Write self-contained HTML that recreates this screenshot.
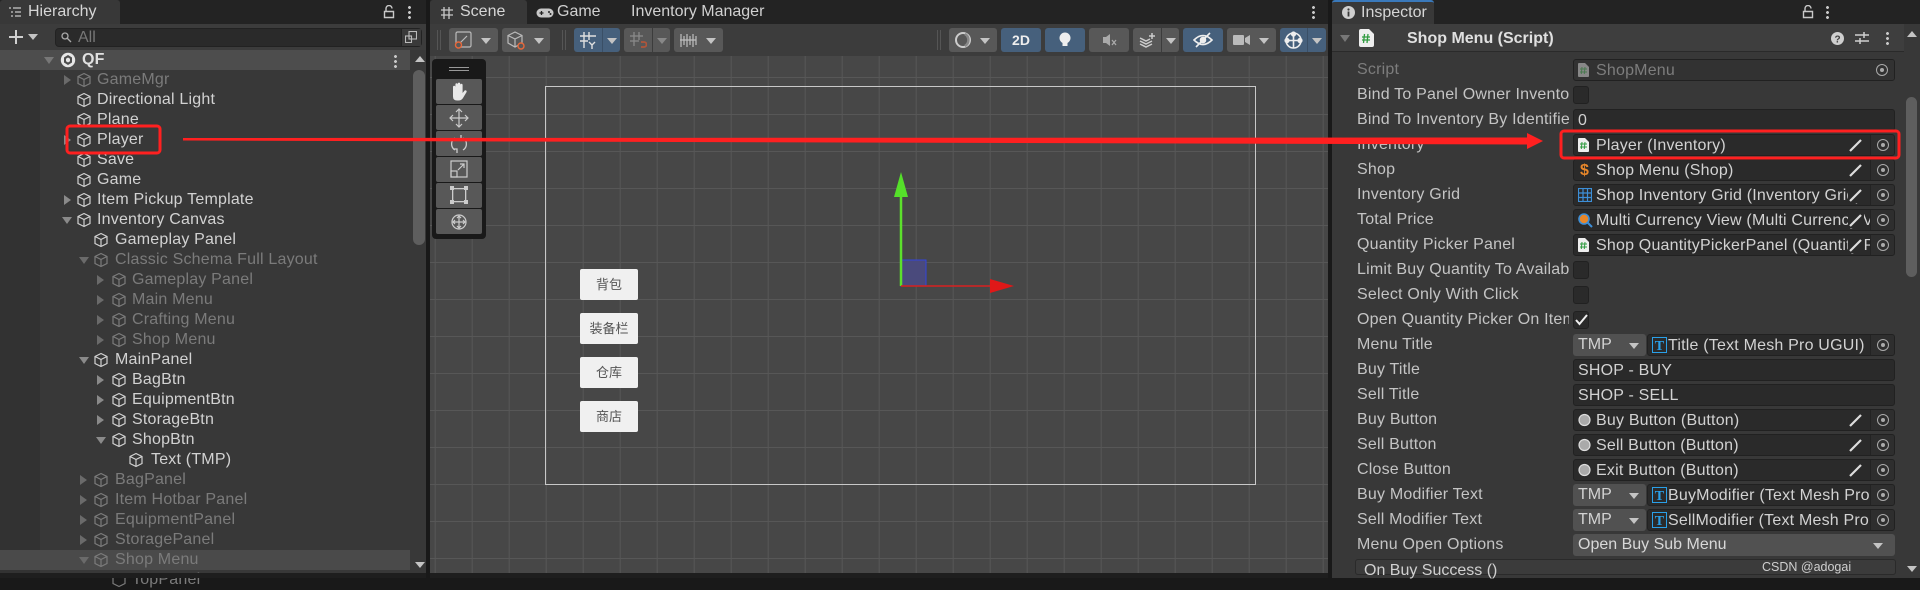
<!DOCTYPE html>
<html><head><meta charset="utf-8">
<style>
*{margin:0;padding:0;box-sizing:border-box}
html,body{width:1920px;height:578px;overflow:hidden;background:#191919;font-family:"Liberation Sans","Noto Sans CJK SC",sans-serif;font-size:16px;color:#d2d2d2}
.a{position:absolute}
.tabbar{position:absolute;top:0;height:24px;background:#232323}
.tab{position:absolute;top:0;height:24px;background:#383838;border-radius:3px 3px 0 0;line-height:24px;font-size:16px;color:#d6d6d6}
.r{position:absolute;left:0;width:410px;height:20px;line-height:20px;white-space:nowrap;font-size:16px;letter-spacing:0.2px}
.r span{position:absolute;top:0}
.r svg{position:absolute;top:2px}
.dim{color:#7b7b7b}
.art{position:absolute;top:5px;width:0;height:0;border-top:5px solid transparent;border-bottom:5px solid transparent;border-left:7px solid #8a8a8a}
.ard{position:absolute;top:7px;width:0;height:0;border-left:5px solid transparent;border-right:5px solid transparent;border-top:7px solid #8a8a8a}
.dim .art{border-left-color:#6a6a6a}.dim .ard{border-top-color:#6a6a6a}
.btn{position:absolute;top:28px;height:24px;background:#585858;border-radius:3px}
.blue{background:#46607c}
.dd{position:absolute;top:10px;width:0;height:0;border-left:5px solid transparent;border-right:5px solid transparent;border-top:6px solid #c4c4c4}
.tp{position:absolute;left:436px;width:46px;height:25px;background:#585858;border-radius:2px}
.lbl{position:absolute;left:1357px;width:212px;overflow:hidden;white-space:nowrap;height:22px;line-height:22px;color:#c4c4c4;font-size:16px;letter-spacing:0.2px}
.fld{position:absolute;height:22px;line-height:21px;background:#2a2a2a;border:1px solid #212121;border-radius:3px;white-space:nowrap;overflow:hidden;font-size:16px;letter-spacing:0.2px;color:#d2d2d2}
.chk{position:absolute;left:1573px;width:16px;height:18px;background:#2a2a2a;border:1px solid #212121;border-radius:3px}
.obj{left:1573px;width:322px;padding-left:22px}
.tgt{position:absolute;right:0;top:0;width:24px;height:20px;background:#2e2e2e;border-left:1px solid #232323}
.tgt:after{content:"";position:absolute;left:6px;top:4px;width:10px;height:10px;border:1.5px solid #aaa;border-radius:50%}
.tgt:before{content:"";position:absolute;left:10px;top:8px;width:4px;height:4px;background:#aaa;border-radius:50%;z-index:1}
.pen{position:absolute;right:30px;top:2px;background:#2a2a2a}
.ic{position:absolute;left:4px;top:3px}
.tmp{position:absolute;left:1573px;width:73px;height:22px;background:#515151;border-radius:3px;line-height:22px;padding-left:5px;font-size:16px;color:#d2d2d2}
.tmp .dd{left:56px;top:9px}
.chip{position:absolute;left:12px;top:4px}
</style></head><body>

<!-- ================= HIERARCHY ================= -->
<div class="tabbar" style="left:0;width:427px"></div>
<div class="tab" style="left:0;width:120px">
 <svg class="a" style="left:8px;top:6px" width="14" height="12" viewBox="0 0 14 12" stroke="#c8c8c8" stroke-width="1.3"><path d="M1 2h2M5 2h8M3 6h2M7 6h6M3 10h2M7 10h6"/></svg>
 <span class="a" style="left:28px">Hierarchy</span></div>
<svg class="a" style="left:383px;top:5px" width="12" height="14" viewBox="0 0 12 14" fill="none" stroke="#c8c8c8" stroke-width="1.4"><path d="M3 6V3.5a3 3 0 0 1 6 0M1.5 6.5h9v6h-9z"/></svg>
<div class="a" style="left:408px;top:5px;width:3px;height:14px;background:radial-gradient(circle,#c8c8c8 1.3px,transparent 1.6px) 0 0/3px 5px"></div>
<div class="a" style="left:0;top:24px;width:427px;height:26px;background:#3c3c3c"></div>
<svg class="a" style="left:8px;top:29px" width="16" height="16" stroke="#d0d0d0" stroke-width="2"><path d="M8 1v14M1 8h14"/></svg>
<div class="dd" style="left:28px;top:34px"></div>
<div class="a" style="left:55px;top:28px;width:367px;height:19px;background:#2a2a2a;border:1px solid #222;border-radius:4px"></div>
<svg class="a" style="left:61px;top:32px" width="12" height="11" fill="none" stroke="#aaa" stroke-width="1.3"><circle cx="4" cy="4" r="3"/><path d="M6 6l4 4"/></svg>
<span class="a" style="left:78px;top:28px;line-height:19px;color:#777">All</span>
<div class="a" style="left:401px;top:29px;width:20px;height:17px;background:#3a3a3a;border-left:1px solid #222"></div>
<svg class="a" style="left:405px;top:31px" width="12" height="12" fill="none" stroke="#bbb" stroke-width="1.1"><rect x="4" y="0.5" width="7.5" height="7.5"/><rect x="0.5" y="5" width="6" height="6.5"/></svg>

<div class="a" style="left:0;top:50px;width:427px;height:528px;background:#383838"></div>
<div class="a" style="left:0;top:70px;width:40px;height:508px;background:#323232"></div>
<div class="a" style="left:0;top:50px;width:410px;height:20px;background:#4d4d4d"></div>
<div class="a" style="left:0;top:550px;width:410px;height:20px;background:#4a4a4a"></div>

<div class="r" style="top:50px"><i class="ard" style="left:44px;border-top-color:#777"></i>
 <svg style="left:60px;top:2px" width="16" height="16" viewBox="0 0 16 16"><circle cx="8" cy="8" r="7.2" fill="#e6e6e6"/><path d="M8 3L12 5.5V10.5L8 13L4 10.5V5.5Z" fill="#4d4d4d"/><path d="M8 5.5L10 6.7V9.3L8 10.5L6 9.3V6.7Z" fill="#e6e6e6"/></svg>
 <span style="left:82px;font-weight:bold;color:#e0e0e0">QF</span></div>
<div class="a" style="left:394px;top:54px;width:3px;height:14px;background:radial-gradient(circle,#c8c8c8 1.3px,transparent 1.6px) 0 0/3px 5px"></div>

<div class="r dim" style="top:70px"><i class="art" style="left:64px"></i><svg style="left:76px" width="16" height="16" viewBox="0 0 16 16" fill="none" stroke="currentColor" stroke-width="1.2"><path d="M8 1.5L14 4.5V11.5L8 14.5L2 11.5V4.5ZM2 4.5L8 7.5L14 4.5M8 7.5V14.5"/></svg><span style="left:97px">GameMgr</span></div>
<div class="r" style="top:90px"><svg style="left:76px" width="16" height="16" viewBox="0 0 16 16" fill="none" stroke="currentColor" stroke-width="1.2"><path d="M8 1.5L14 4.5V11.5L8 14.5L2 11.5V4.5ZM2 4.5L8 7.5L14 4.5M8 7.5V14.5"/></svg><span style="left:97px">Directional Light</span></div>
<div class="r" style="top:110px"><svg style="left:76px" width="16" height="16" viewBox="0 0 16 16" fill="none" stroke="currentColor" stroke-width="1.2"><path d="M8 1.5L14 4.5V11.5L8 14.5L2 11.5V4.5ZM2 4.5L8 7.5L14 4.5M8 7.5V14.5"/></svg><span style="left:97px">Plane</span></div>
<div class="r" style="top:130px"><i class="art" style="left:64px"></i><svg style="left:76px" width="16" height="16" viewBox="0 0 16 16" fill="none" stroke="currentColor" stroke-width="1.2"><path d="M8 1.5L14 4.5V11.5L8 14.5L2 11.5V4.5ZM2 4.5L8 7.5L14 4.5M8 7.5V14.5"/></svg><span style="left:97px">Player</span></div>
<div class="r" style="top:150px"><svg style="left:76px" width="16" height="16" viewBox="0 0 16 16" fill="none" stroke="currentColor" stroke-width="1.2"><path d="M8 1.5L14 4.5V11.5L8 14.5L2 11.5V4.5ZM2 4.5L8 7.5L14 4.5M8 7.5V14.5"/></svg><span style="left:97px">Save</span></div>
<div class="r" style="top:170px"><svg style="left:76px" width="16" height="16" viewBox="0 0 16 16" fill="none" stroke="currentColor" stroke-width="1.2"><path d="M8 1.5L14 4.5V11.5L8 14.5L2 11.5V4.5ZM2 4.5L8 7.5L14 4.5M8 7.5V14.5"/></svg><span style="left:97px">Game</span></div>
<div class="r" style="top:190px"><i class="art" style="left:64px"></i><svg style="left:76px" width="16" height="16" viewBox="0 0 16 16" fill="none" stroke="currentColor" stroke-width="1.2"><path d="M8 1.5L14 4.5V11.5L8 14.5L2 11.5V4.5ZM2 4.5L8 7.5L14 4.5M8 7.5V14.5"/></svg><span style="left:97px">Item Pickup Template</span></div>
<div class="r" style="top:210px"><i class="ard" style="left:62px"></i><svg style="left:76px" width="16" height="16" viewBox="0 0 16 16" fill="none" stroke="currentColor" stroke-width="1.2"><path d="M8 1.5L14 4.5V11.5L8 14.5L2 11.5V4.5ZM2 4.5L8 7.5L14 4.5M8 7.5V14.5"/></svg><span style="left:97px">Inventory Canvas</span></div>
<div class="r" style="top:230px"><svg style="left:93px" width="16" height="16" viewBox="0 0 16 16" fill="none" stroke="currentColor" stroke-width="1.2"><path d="M8 1.5L14 4.5V11.5L8 14.5L2 11.5V4.5ZM2 4.5L8 7.5L14 4.5M8 7.5V14.5"/></svg><span style="left:115px">Gameplay Panel</span></div>
<div class="r dim" style="top:250px"><i class="ard" style="left:79px"></i><svg style="left:93px" width="16" height="16" viewBox="0 0 16 16" fill="none" stroke="currentColor" stroke-width="1.2"><path d="M8 1.5L14 4.5V11.5L8 14.5L2 11.5V4.5ZM2 4.5L8 7.5L14 4.5M8 7.5V14.5"/></svg><span style="left:115px">Classic Schema Full Layout</span></div>
<div class="r dim" style="top:270px"><i class="art" style="left:97px"></i><svg style="left:111px" width="16" height="16" viewBox="0 0 16 16" fill="none" stroke="currentColor" stroke-width="1.2"><path d="M8 1.5L14 4.5V11.5L8 14.5L2 11.5V4.5ZM2 4.5L8 7.5L14 4.5M8 7.5V14.5"/></svg><span style="left:132px">Gameplay Panel</span></div>
<div class="r dim" style="top:290px"><i class="art" style="left:97px"></i><svg style="left:111px" width="16" height="16" viewBox="0 0 16 16" fill="none" stroke="currentColor" stroke-width="1.2"><path d="M8 1.5L14 4.5V11.5L8 14.5L2 11.5V4.5ZM2 4.5L8 7.5L14 4.5M8 7.5V14.5"/></svg><span style="left:132px">Main Menu</span></div>
<div class="r dim" style="top:310px"><i class="art" style="left:97px"></i><svg style="left:111px" width="16" height="16" viewBox="0 0 16 16" fill="none" stroke="currentColor" stroke-width="1.2"><path d="M8 1.5L14 4.5V11.5L8 14.5L2 11.5V4.5ZM2 4.5L8 7.5L14 4.5M8 7.5V14.5"/></svg><span style="left:132px">Crafting Menu</span></div>
<div class="r dim" style="top:330px"><i class="art" style="left:97px"></i><svg style="left:111px" width="16" height="16" viewBox="0 0 16 16" fill="none" stroke="currentColor" stroke-width="1.2"><path d="M8 1.5L14 4.5V11.5L8 14.5L2 11.5V4.5ZM2 4.5L8 7.5L14 4.5M8 7.5V14.5"/></svg><span style="left:132px">Shop Menu</span></div>
<div class="r" style="top:350px"><i class="ard" style="left:79px"></i><svg style="left:93px" width="16" height="16" viewBox="0 0 16 16" fill="none" stroke="currentColor" stroke-width="1.2"><path d="M8 1.5L14 4.5V11.5L8 14.5L2 11.5V4.5ZM2 4.5L8 7.5L14 4.5M8 7.5V14.5"/></svg><span style="left:115px">MainPanel</span></div>
<div class="r" style="top:370px"><i class="art" style="left:97px"></i><svg style="left:111px" width="16" height="16" viewBox="0 0 16 16" fill="none" stroke="currentColor" stroke-width="1.2"><path d="M8 1.5L14 4.5V11.5L8 14.5L2 11.5V4.5ZM2 4.5L8 7.5L14 4.5M8 7.5V14.5"/></svg><span style="left:132px">BagBtn</span></div>
<div class="r" style="top:390px"><i class="art" style="left:97px"></i><svg style="left:111px" width="16" height="16" viewBox="0 0 16 16" fill="none" stroke="currentColor" stroke-width="1.2"><path d="M8 1.5L14 4.5V11.5L8 14.5L2 11.5V4.5ZM2 4.5L8 7.5L14 4.5M8 7.5V14.5"/></svg><span style="left:132px">EquipmentBtn</span></div>
<div class="r" style="top:410px"><i class="art" style="left:97px"></i><svg style="left:111px" width="16" height="16" viewBox="0 0 16 16" fill="none" stroke="currentColor" stroke-width="1.2"><path d="M8 1.5L14 4.5V11.5L8 14.5L2 11.5V4.5ZM2 4.5L8 7.5L14 4.5M8 7.5V14.5"/></svg><span style="left:132px">StorageBtn</span></div>
<div class="r" style="top:430px"><i class="ard" style="left:96px"></i><svg style="left:111px" width="16" height="16" viewBox="0 0 16 16" fill="none" stroke="currentColor" stroke-width="1.2"><path d="M8 1.5L14 4.5V11.5L8 14.5L2 11.5V4.5ZM2 4.5L8 7.5L14 4.5M8 7.5V14.5"/></svg><span style="left:132px">ShopBtn</span></div>
<div class="r" style="top:450px"><svg style="left:128px" width="16" height="16" viewBox="0 0 16 16" fill="none" stroke="currentColor" stroke-width="1.2"><path d="M8 1.5L14 4.5V11.5L8 14.5L2 11.5V4.5ZM2 4.5L8 7.5L14 4.5M8 7.5V14.5"/></svg><span style="left:151px">Text (TMP)</span></div>
<div class="r dim" style="top:470px"><i class="art" style="left:80px"></i><svg style="left:93px" width="16" height="16" viewBox="0 0 16 16" fill="none" stroke="currentColor" stroke-width="1.2"><path d="M8 1.5L14 4.5V11.5L8 14.5L2 11.5V4.5ZM2 4.5L8 7.5L14 4.5M8 7.5V14.5"/></svg><span style="left:115px">BagPanel</span></div>
<div class="r dim" style="top:490px"><i class="art" style="left:80px"></i><svg style="left:93px" width="16" height="16" viewBox="0 0 16 16" fill="none" stroke="currentColor" stroke-width="1.2"><path d="M8 1.5L14 4.5V11.5L8 14.5L2 11.5V4.5ZM2 4.5L8 7.5L14 4.5M8 7.5V14.5"/></svg><span style="left:115px">Item Hotbar Panel</span></div>
<div class="r dim" style="top:510px"><i class="art" style="left:80px"></i><svg style="left:93px" width="16" height="16" viewBox="0 0 16 16" fill="none" stroke="currentColor" stroke-width="1.2"><path d="M8 1.5L14 4.5V11.5L8 14.5L2 11.5V4.5ZM2 4.5L8 7.5L14 4.5M8 7.5V14.5"/></svg><span style="left:115px">EquipmentPanel</span></div>
<div class="r dim" style="top:530px"><i class="art" style="left:80px"></i><svg style="left:93px" width="16" height="16" viewBox="0 0 16 16" fill="none" stroke="currentColor" stroke-width="1.2"><path d="M8 1.5L14 4.5V11.5L8 14.5L2 11.5V4.5ZM2 4.5L8 7.5L14 4.5M8 7.5V14.5"/></svg><span style="left:115px">StoragePanel</span></div>
<div class="r dim" style="top:550px"><i class="ard" style="left:79px"></i><svg style="left:93px" width="16" height="16" viewBox="0 0 16 16" fill="none" stroke="currentColor" stroke-width="1.2"><path d="M8 1.5L14 4.5V11.5L8 14.5L2 11.5V4.5ZM2 4.5L8 7.5L14 4.5M8 7.5V14.5"/></svg><span style="left:115px">Shop Menu</span></div>
<div class="r dim" style="top:570px"><svg style="left:111px" width="16" height="16" viewBox="0 0 16 16" fill="none" stroke="currentColor" stroke-width="1.2"><path d="M8 1.5L14 4.5V11.5L8 14.5L2 11.5V4.5Z"/></svg><span style="left:132px">TopPanel</span></div>
<div class="a" style="left:0;top:573px;width:1920px;height:5px;background:#1e1e1e"></div>

<!-- hierarchy scrollbar -->
<div class="a" style="left:415px;top:56px;width:0;height:0;border-left:5px solid transparent;border-right:5px solid transparent;border-bottom:6px solid #c4c4c4"></div>
<div class="a" style="left:413px;top:70px;width:12px;height:175px;background:#5e5e5e;border-radius:6px"></div>
<div class="a" style="left:415px;top:562px;width:0;height:0;border-left:5px solid transparent;border-right:5px solid transparent;border-top:6px solid #c4c4c4"></div>

<!-- ================= SCENE ================= -->
<div class="tabbar" style="left:430px;width:898px"></div>
<div class="tab" style="left:430px;width:97px">
 <svg class="a" style="left:10px;top:6px" width="13" height="13" stroke="#c8c8c8" stroke-width="1.3"><path d="M4 1v12M9 1v12M1 4h12M1 9h12"/></svg>
 <span class="a" style="left:30px">Scene</span></div>
<svg class="a" style="left:536px;top:8px" width="18" height="10" viewBox="0 0 18 10"><rect x="0.5" y="0.5" width="17" height="9" rx="4.5" fill="#c8c8c8"/><path d="M3.5 5h4M5.5 3v4" stroke="#232323" stroke-width="1.3"/><circle cx="13" cy="4" r="1" fill="#232323"/><circle cx="14.5" cy="6" r="1" fill="#232323"/></svg>
<span class="a" style="left:557px;top:0;line-height:24px;color:#d0d0d0">Game</span>
<span class="a" style="left:631px;top:0;line-height:24px;color:#d0d0d0">Inventory Manager</span>
<div class="a" style="left:1312px;top:5px;width:3px;height:14px;background:radial-gradient(circle,#c8c8c8 1.3px,transparent 1.6px) 0 0/3px 5px"></div>

<div class="a" style="left:430px;top:24px;width:898px;height:32px;background:#3c3c3c"></div>
<div class="a" style="left:437px;top:30px;width:4px;height:20px;border-left:1px solid #555;border-right:1px solid #555"></div>
<div class="btn" style="left:449px;width:49px"><svg class="a" style="left:5px;top:3px" width="18" height="18" fill="none"><rect x="2" y="1" width="15" height="15" rx="1.5" stroke="#bbb" stroke-width="1.2"/><path d="M6 12L13 5" stroke="#bbb" stroke-width="1.2"/><circle cx="4.5" cy="14" r="3" stroke="#e8683a" stroke-width="1.4" fill="#585858"/></svg><i class="dd" style="left:32px"></i></div>
<div class="btn" style="left:502px;width:48px"><svg class="a" style="left:4px;top:3px" width="19" height="19" fill="none" stroke="#bbb" stroke-width="1.2"><path d="M9 1L16 4.5V12L9 16L2 12V4.5ZM2 4.5L9 8L16 4.5M9 8V16"/><circle cx="15" cy="15" r="3" stroke="#e8683a" stroke-width="1.4" fill="#585858"/></svg><i class="dd" style="left:32px"></i></div>
<div class="a" style="left:562px;top:30px;width:4px;height:20px;border-left:1px solid #555;border-right:1px solid #555"></div>
<div class="btn blue" style="left:574px;width:46px"><svg class="a" style="left:5px;top:3px" width="18" height="18" stroke="#e0e0e0" stroke-width="1.4" fill="none"><path d="M5 1v16M10 1v8M1 5h16M1 10h8M10 11l3 3 3-3M13 14v4"/></svg><div class="a" style="left:28px;top:0;width:1px;height:24px;background:#3a4f66"></div><i class="dd" style="left:33px"></i></div>
<div class="btn" style="left:624px;width:46px"><svg class="a" style="left:5px;top:3px" width="18" height="18" stroke="#8a8a8a" stroke-width="1.3" fill="none"><path d="M5 1v14M10 1v8M1 5h13M1 10h9"/><path d="M12 11h3a2.5 2.5 0 0 1 0 5h-3" stroke="#b0553a" stroke-width="1.8"/></svg><div class="a" style="left:28px;top:0;width:1px;height:24px;background:#3c3c3c"></div><i class="dd" style="left:33px;border-top-color:#888"></i></div>
<div class="btn" style="left:674px;width:49px"><svg class="a" style="left:5px;top:4px" width="18" height="16" stroke="#c0c0c0" stroke-width="1.2"><path d="M1 8h16M2 2v13M5 4v9M8 2v13M11 4v9M14 2v13M17 4v9"/></svg><i class="dd" style="left:32px"></i></div>

<div class="a" style="left:937px;top:30px;width:4px;height:20px;border-left:1px solid #555;border-right:1px solid #555"></div>
<div class="btn" style="left:949px;width:48px"><svg class="a" style="left:5px;top:3px" width="18" height="18" fill="none"><circle cx="9" cy="9" r="7" stroke="#ccc" stroke-width="2"/><path d="M11 3a7 7 0 0 1 0 12" stroke="#888" stroke-width="2.5"/></svg><i class="dd" style="left:31px"></i></div>
<div class="btn blue" style="left:1001px;width:40px;text-align:center;line-height:24px;font-weight:bold;font-size:14px;color:#eee">2D</div>
<div class="btn blue" style="left:1045px;width:40px"><svg class="a" style="left:13px;top:3px" width="14" height="18"><circle cx="7" cy="7" r="5.5" fill="#eee"/><rect x="4.5" y="11" width="5" height="4" fill="#eee"/></svg></div>
<div class="btn" style="left:1089px;width:40px"><svg class="a" style="left:13px;top:5px" width="16" height="14" fill="#aaa"><path d="M1 4h3l4-3v12l-4-3H1z"/><path d="M10 7l4 5M14 7l-4 5" stroke="#aaa" stroke-width="1.3"/></svg></div>
<div class="btn" style="left:1133px;width:46px"><svg class="a" style="left:5px;top:4px" width="18" height="16" stroke="#ccc" stroke-width="1.5" fill="none"><path d="M2 9l6 3 6-3M2 12l6 3 6-3M2 6l6 3 4-2"/><path d="M14 1v6M11 4h6"/></svg><div class="a" style="left:28px;top:0;width:1px;height:24px;background:#3c3c3c"></div><i class="dd" style="left:33px"></i></div>
<div class="btn blue" style="left:1183px;width:40px"><svg class="a" style="left:10px;top:4px" width="20" height="16" fill="none" stroke="#eee" stroke-width="1.6"><path d="M1 8q9-9 18 0q-9 9-18 0z"/><circle cx="10" cy="8" r="2.5" fill="#eee"/><path d="M3 15L17 1"/></svg></div>
<div class="btn" style="left:1227px;width:49px"><svg class="a" style="left:6px;top:6px" width="18" height="12" fill="#bbb"><rect x="0" y="1" width="11" height="10" rx="1"/><path d="M12 4l5-3v10l-5-3z"/></svg><i class="dd" style="left:32px"></i></div>
<div class="btn blue" style="left:1280px;width:46px"><svg class="a" style="left:4px;top:3px" width="19" height="19" fill="none" stroke="#eee" stroke-width="1.6"><circle cx="9.5" cy="9.5" r="7.5"/><path d="M2 9.5h15M9.5 2v15"/><circle cx="9.5" cy="3" r="1.8" fill="#eee"/><circle cx="3" cy="9.5" r="1.8" fill="#eee"/><circle cx="16" cy="9.5" r="1.8" fill="#eee"/></svg><div class="a" style="left:27px;top:0;width:1px;height:24px;background:#3a4f66"></div><i class="dd" style="left:32px"></i></div>

<!-- scene view -->
<div class="a" style="left:430px;top:56px;width:898px;height:517px;background-color:#474747;background-image:linear-gradient(90deg,#575757 1px,transparent 1px),linear-gradient(0deg,#575757 1px,transparent 1px);background-size:37px 37px,37px 37px;background-position:4.7px 0,0 22px"></div>
<div class="a" style="left:545px;top:86px;width:711px;height:399px;border:1.3px solid #c8c8c8"></div>
<div class="a" style="left:580px;top:269px;width:58px;height:31px;background:#f0f0f0;border-radius:2px;text-align:center;line-height:31px;font-size:13px;color:#555">背包</div>
<div class="a" style="left:580px;top:313px;width:58px;height:31px;background:#f0f0f0;border-radius:2px;text-align:center;line-height:31px;font-size:13px;color:#555">装备栏</div>
<div class="a" style="left:580px;top:357px;width:58px;height:31px;background:#f0f0f0;border-radius:2px;text-align:center;line-height:31px;font-size:13px;color:#555">仓库</div>
<div class="a" style="left:580px;top:401px;width:58px;height:31px;background:#f0f0f0;border-radius:2px;text-align:center;line-height:31px;font-size:13px;color:#555">商店</div>
<svg class="a" style="left:880px;top:160px" width="140" height="140">
 <rect x="21" y="100" width="25" height="26" fill="#4a4a7c" stroke="#3344dd" stroke-width="1"/>
 <path d="M21 126V34" stroke="#5ce02c" stroke-width="2.5"/>
 <path d="M14 37L21 12L28 37Z" fill="#55e02a"/>
 <path d="M21 126H112" stroke="#d82020" stroke-width="1.5"/>
 <path d="M110 119L134 126L110 133Z" fill="#e01818"/>
</svg>

<!-- tool palette -->
<div class="a" style="left:432px;top:59px;width:54px;height:180px;background:#191919;border-radius:4px"></div>
<div class="a" style="left:449px;top:67px;width:20px;height:4px;border-top:1px solid #999;border-bottom:1px solid #999"></div>
<div class="tp blue" style="top:79px"><svg class="a" style="left:14px;top:3px" width="18" height="19" viewBox="0 0 18 19" fill="#e8e8e8"><path d="M3 10V5a1.2 1.2 0 0 1 2.4 0v4V2.5a1.2 1.2 0 0 1 2.4 0V9V1.8a1.2 1.2 0 0 1 2.4 0V9V3a1.2 1.2 0 0 1 2.4 0v8l2-2.5a1.3 1.3 0 0 1 2 1.5L13 16q-1.5 2.5-4.5 2.5H7q-4 0-4-4z"/></svg></div>
<div class="tp" style="top:105px"><svg class="a" style="left:13px;top:3px" width="20" height="20" fill="none" stroke="#ccc" stroke-width="1.2"><path d="M10 1v18M1 10h18M7 4l3-3 3 3M7 16l3 3 3-3M4 7l-3 3 3 3M16 7l3 3-3 3"/></svg></div>
<div class="tp" style="top:131px"><svg class="a" style="left:13px;top:3px" width="20" height="20" fill="none" stroke="#ccc" stroke-width="1.3"><path d="M6 4a7 7 0 0 0 0 12M14 16a7 7 0 0 0 0-12M12 1v4h4M8 19v-4H4"/></svg></div>
<div class="tp" style="top:157px"><svg class="a" style="left:14px;top:3px" width="18" height="18" fill="none" stroke="#ccc" stroke-width="1.2"><rect x="1" y="1" width="16" height="16"/><rect x="1" y="11" width="6" height="6"/><path d="M8 10l6-6M10 4h4v4"/></svg></div>
<div class="tp" style="top:183px"><svg class="a" style="left:14px;top:3px" width="18" height="18" fill="#ccc"><rect x="3" y="2" width="12" height="1.3"/><rect x="3" y="15" width="12" height="1.3"/><rect x="2" y="3" width="1.3" height="12"/><rect x="15" y="3" width="1.3" height="12"/><rect x="0" y="0" width="4" height="4"/><rect x="14" y="0" width="4" height="4"/><rect x="0" y="14" width="4" height="4"/><rect x="14" y="14" width="4" height="4"/></svg></div>
<div class="tp" style="top:209px"><svg class="a" style="left:13px;top:3px" width="20" height="20" fill="none" stroke="#ccc" stroke-width="1.2"><circle cx="10" cy="10" r="7"/><path d="M10 4v12M4 10h12M8 6l2-2 2 2M8 14l2 2 2-2M6 8l-2 2 2 2M14 8l2 2-2 2"/></svg></div>

<!-- ================= INSPECTOR ================= -->
<div class="tabbar" style="left:1332px;width:588px"></div>
<div class="tab" style="left:1332px;width:102px;border-top:2px solid #3a79bb;line-height:22px">
 <svg class="a" style="left:10px;top:4px" width="13" height="13"><circle cx="6.5" cy="6.5" r="6.5" fill="#cfcfcf"/><rect x="5.6" y="5.5" width="1.8" height="5" fill="#383838"/><circle cx="6.5" cy="3.5" r="1.1" fill="#383838"/></svg>
 <span class="a" style="left:29px">Inspector</span></div>
<svg class="a" style="left:1802px;top:5px" width="12" height="14" viewBox="0 0 12 14" fill="none" stroke="#c8c8c8" stroke-width="1.4"><path d="M3 6V3.5a3 3 0 0 1 6 0M1.5 6.5h9v6h-9z"/></svg>
<div class="a" style="left:1826px;top:5px;width:3px;height:14px;background:radial-gradient(circle,#c8c8c8 1.3px,transparent 1.6px) 0 0/3px 5px"></div>

<div class="a" style="left:1332px;top:24px;width:588px;height:554px;background:#383838"></div>
<div class="a" style="left:1332px;top:24px;width:572px;height:28px;background:#3e3e3e;border-bottom:1px solid #2a2a2a"></div>
<div class="a" style="left:1340px;top:35px;width:0;height:0;border-left:5px solid transparent;border-right:5px solid transparent;border-top:7px solid #777"></div>
<svg class="a" style="left:1359px;top:29px" width="15" height="18"><path d="M0 2a2 2 0 0 1 2-2h8l5 5v11a2 2 0 0 1-2 2H2a2 2 0 0 1-2-2z" fill="#eee"/><path d="M5.5 5l-1 9M9 5l-1 9M3 8h8M3 11h8" stroke="#2e9a3e" stroke-width="1.3"/></svg>
<span class="a" style="left:1407px;top:28px;line-height:22px;font-weight:bold;font-size:16px;color:#e0e0e0">Shop Menu (Script)</span>
<svg class="a" style="left:1831px;top:32px" width="13" height="13"><circle cx="6.5" cy="6.5" r="6.5" fill="#cfcfcf"/><text x="6.5" y="10.5" text-anchor="middle" font-size="10" font-weight="bold" fill="#3e3e3e" font-family="Liberation Sans">?</text></svg>
<svg class="a" style="left:1855px;top:31px" width="14" height="14" stroke="#cfcfcf" stroke-width="1.5"><path d="M0 4h14M0 10h14M9 1v6M5 7v6"/></svg>
<div class="a" style="left:1886px;top:31px;width:3px;height:14px;background:radial-gradient(circle,#c8c8c8 1.3px,transparent 1.6px) 0 0/3px 5px"></div>

<!-- inspector scrollbar -->
<div class="a" style="left:1907px;top:31px;width:0;height:0;border-left:5px solid transparent;border-right:5px solid transparent;border-bottom:6px solid #c4c4c4"></div>
<div class="a" style="left:1906px;top:97px;width:11px;height:180px;background:#5e5e5e;border-radius:6px"></div>
<div class="a" style="left:1907px;top:566px;width:0;height:0;border-left:5px solid transparent;border-right:5px solid transparent;border-top:6px solid #c4c4c4"></div>

<div class="lbl" style="top:59px;color:#7d7d7d">Script</div>
<div class="fld obj" style="top:59px;color:#7d7d7d;background:#323232"><svg class="ic" width="11" height="14"><path d="M0 1a1 1 0 0 1 1-1h6l4 4v9a1 1 0 0 1-1 1H1a1 1 0 0 1-1-1z" fill="#888"/><path d="M4 4l-.7 7M7 4l-.7 7M2 6h7M2 9h7" stroke="#4a7a50" stroke-width="1"/></svg>ShopMenu<i class="tgt" style="background:#323232;border:none"></i></div>

<div class="lbl" style="top:84px">Bind To Panel Owner Inventory</div>
<div class="chk" style="top:86px"></div>

<div class="lbl" style="top:109px">Bind To Inventory By Identifier</div>
<div class="fld" style="top:109px;left:1573px;width:322px;padding-left:4px">0</div>

<div class="lbl" style="top:134px">Inventory</div>
<div class="fld obj" style="top:134px"><svg class="ic" width="11" height="14"><path d="M0 1a1 1 0 0 1 1-1h6l4 4v9a1 1 0 0 1-1 1H1a1 1 0 0 1-1-1z" fill="#eee"/><path d="M4 4l-.7 7M7 4l-.7 7M2 6h7M2 9h7" stroke="#2e9a3e" stroke-width="1"/></svg>Player (Inventory)<svg class="pen" width="16" height="16" fill="none" stroke="#ddd" stroke-width="2.2"><path d="M2 14L13 3"/></svg><i class="tgt"></i></div>

<div class="lbl" style="top:159px">Shop</div>
<div class="fld obj" style="top:159px"><span class="a" style="left:6px;top:0;color:#e8872a;font-weight:bold">$</span>Shop Menu (Shop)<svg class="pen" width="16" height="16" fill="none" stroke="#ddd" stroke-width="2.2"><path d="M2 14L13 3"/></svg><i class="tgt"></i></div>

<div class="lbl" style="top:184px">Inventory Grid</div>
<div class="fld obj" style="top:184px"><svg class="ic" width="14" height="14" stroke="#3d8fd8" stroke-width="1.2" fill="none"><rect x="0.5" y="0.5" width="13" height="13"/><path d="M5 0v14M9.5 0v14M0 5h14M0 9.5h14"/></svg>Shop Inventory Grid (Inventory Grid)<svg class="pen" width="16" height="16" fill="none" stroke="#ddd" stroke-width="2.2"><path d="M2 14L13 3"/></svg><i class="tgt"></i></div>

<div class="lbl" style="top:209px">Total Price</div>
<div class="fld obj" style="top:209px"><svg class="ic" width="15" height="15"><circle cx="6" cy="6" r="5" fill="#e8872a" stroke="#3d8fd8" stroke-width="1.6"/><path d="M9.5 9.5L14 14" stroke="#3d8fd8" stroke-width="2"/></svg>Multi Currency View (Multi Currency View)<svg class="pen" width="16" height="16" fill="none" stroke="#ddd" stroke-width="2.2"><path d="M2 14L13 3"/></svg><i class="tgt"></i></div>

<div class="lbl" style="top:234px">Quantity Picker Panel</div>
<div class="fld obj" style="top:234px"><svg class="ic" width="11" height="14"><path d="M0 1a1 1 0 0 1 1-1h6l4 4v9a1 1 0 0 1-1 1H1a1 1 0 0 1-1-1z" fill="#eee"/><path d="M4 4l-.7 7M7 4l-.7 7M2 6h7M2 9h7" stroke="#2e9a3e" stroke-width="1"/></svg>Shop QuantityPickerPanel (Quantity Picker)<svg class="pen" width="16" height="16" fill="none" stroke="#ddd" stroke-width="2.2"><path d="M2 14L13 3"/></svg><i class="tgt"></i></div>

<div class="lbl" style="top:259px">Limit Buy Quantity To Available</div>
<div class="chk" style="top:261px"></div>
<div class="lbl" style="top:284px">Select Only With Click</div>
<div class="chk" style="top:286px"></div>
<div class="lbl" style="top:309px">Open Quantity Picker On Item</div>
<div class="chk" style="top:311px"><svg class="a" style="left:1px;top:2px" width="13" height="12" fill="none" stroke="#eee" stroke-width="2"><path d="M1 6l3.5 4L12 1"/></svg></div>

<div class="lbl" style="top:334px">Menu Title</div>
<div class="tmp" style="top:334px">TMP<i class="dd"></i></div>
<div class="fld" style="top:334px;left:1647px;width:248px;padding-left:20px"><svg class="chip" style="left:4px;top:2px" width="15" height="16"><rect x="0.5" y="0.5" width="14" height="15" fill="none" stroke="#2aa0e8"/><text x="7.5" y="13" text-anchor="middle" font-size="14" font-weight="bold" fill="#2aa0e8" font-family="Liberation Serif">T</text></svg>Title (Text Mesh Pro UGUI)<i class="tgt"></i></div>

<div class="lbl" style="top:359px">Buy Title</div>
<div class="fld" style="top:359px;left:1573px;width:322px;padding-left:4px">SHOP - BUY</div>
<div class="lbl" style="top:384px">Sell Title</div>
<div class="fld" style="top:384px;left:1573px;width:322px;padding-left:4px">SHOP - SELL</div>

<div class="lbl" style="top:409px">Buy Button</div>
<div class="fld obj" style="top:409px"><svg class="ic" width="13" height="14"><circle cx="6.5" cy="7" r="5.5" fill="#aaa" stroke="#ddd" stroke-width="1.2"/></svg>Buy Button (Button)<svg class="pen" width="16" height="16" fill="none" stroke="#ddd" stroke-width="2.2"><path d="M2 14L13 3"/></svg><i class="tgt"></i></div>
<div class="lbl" style="top:434px">Sell Button</div>
<div class="fld obj" style="top:434px"><svg class="ic" width="13" height="14"><circle cx="6.5" cy="7" r="5.5" fill="#aaa" stroke="#ddd" stroke-width="1.2"/></svg>Sell Button (Button)<svg class="pen" width="16" height="16" fill="none" stroke="#ddd" stroke-width="2.2"><path d="M2 14L13 3"/></svg><i class="tgt"></i></div>
<div class="lbl" style="top:459px">Close Button</div>
<div class="fld obj" style="top:459px"><svg class="ic" width="13" height="14"><circle cx="6.5" cy="7" r="5.5" fill="#aaa" stroke="#ddd" stroke-width="1.2"/></svg>Exit Button (Button)<svg class="pen" width="16" height="16" fill="none" stroke="#ddd" stroke-width="2.2"><path d="M2 14L13 3"/></svg><i class="tgt"></i></div>

<div class="lbl" style="top:484px">Buy Modifier Text</div>
<div class="tmp" style="top:484px">TMP<i class="dd"></i></div>
<div class="fld" style="top:484px;left:1647px;width:248px;padding-left:20px"><svg class="chip" style="left:4px;top:2px" width="15" height="16"><rect x="0.5" y="0.5" width="14" height="15" fill="none" stroke="#2aa0e8"/><text x="7.5" y="13" text-anchor="middle" font-size="14" font-weight="bold" fill="#2aa0e8" font-family="Liberation Serif">T</text></svg>BuyModifier (Text Mesh Pro UGUI)<i class="tgt"></i></div>
<div class="lbl" style="top:509px">Sell Modifier Text</div>
<div class="tmp" style="top:509px">TMP<i class="dd"></i></div>
<div class="fld" style="top:509px;left:1647px;width:248px;padding-left:20px"><svg class="chip" style="left:4px;top:2px" width="15" height="16"><rect x="0.5" y="0.5" width="14" height="15" fill="none" stroke="#2aa0e8"/><text x="7.5" y="13" text-anchor="middle" font-size="14" font-weight="bold" fill="#2aa0e8" font-family="Liberation Serif">T</text></svg>SellModifier (Text Mesh Pro UGUI)<i class="tgt"></i></div>

<div class="lbl" style="top:534px">Menu Open Options</div>
<div class="a" style="top:534px;left:1573px;width:322px;height:22px;background:#515151;border-radius:3px;line-height:22px;padding-left:5px;color:#d8d8d8;font-size:16px">Open Buy Sub Menu<i class="dd" style="left:300px;top:9px"></i></div>

<div class="a" style="left:1355px;top:559px;width:541px;height:16px;border:1px solid #2a2a2a;border-radius:3px;background:#3b3b3b"></div>
<span class="a" style="left:1364px;top:561px;line-height:20px;color:#d0d0d0;font-size:16px">On Buy Success ()</span>
<span class="a" style="left:1762px;top:558px;line-height:18px;font-size:12.5px;color:#cfcfcf">CSDN @adogai</span>

<!-- panel separators -->
<div class="a" style="left:426px;top:0;width:4px;height:578px;background:#191919"></div>
<div class="a" style="left:1328px;top:0;width:4px;height:578px;background:#191919"></div>

<!-- annotations -->
<svg class="a" style="left:0;top:0" width="1920" height="578">
 <rect x="67" y="126" width="93" height="27" rx="3" fill="none" stroke="#ff2020" stroke-width="3"/>
 <rect x="1561" y="131" width="338" height="27" rx="3" fill="none" stroke="#ff2020" stroke-width="3"/>
 <polygon points="183,138 1527,137.5 1527,133 1543,141 1527,149 1527,144.5 183,140.5" fill="#ff2020"/>
</svg>
</body></html>
